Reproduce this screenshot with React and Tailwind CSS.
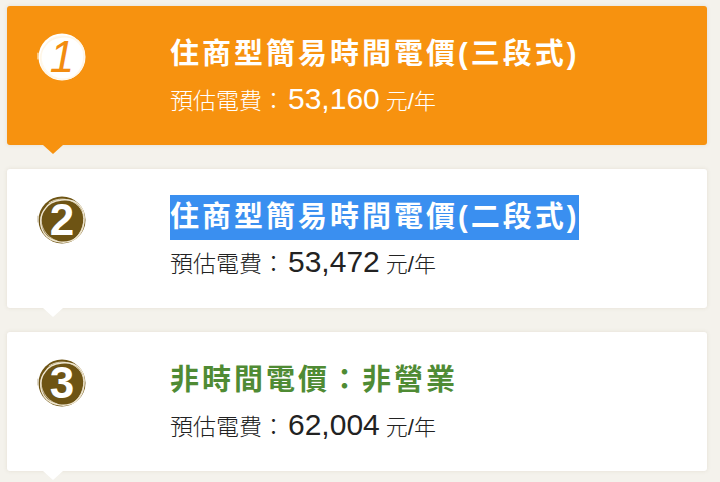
import React from "react";

function Badge({ n, light }) {
  const fill = light ? "#ffffff" : "#6e5414";
  const stroke = light ? "#fff6e6" : "#efe6d0";
  return (
    <div className="relative w-[50px] h-[50px] shrink-0">
      <svg width="50" height="50" viewBox="0 0 50 50" className="absolute inset-0">
        <circle cx="25" cy="25" r="23.5" fill={fill} />
        <path d="M8 14 C14 4 34 1 43 11 C50 19 48 36 39 43 C30 50 14 48 7 38 C2 30 3 20 8 14" fill="none" stroke={stroke} strokeWidth="1.4" strokeLinecap="round" />
        <path d="M12 8 C22 1 38 3 45 16 C49 25 46 38 36 45" fill="none" stroke={stroke} strokeWidth="1" strokeLinecap="round" opacity="0.85" />
        <path d="M4 22 C3 30 8 42 20 46" fill="none" stroke={stroke} strokeWidth="1" strokeLinecap="round" opacity="0.75" />
        <path d="M1 21 L1 27" stroke={light ? "#ffe9c8" : "#c9bfa6"} strokeWidth="1.2" strokeLinecap="round" />
      </svg>
      <div
        className={
          "absolute inset-0 flex items-center justify-center leading-none pb-[1px] " +
          (light ? "text-[#f28c10] italic text-[44px] font-normal" : "text-white text-[44px] font-bold")
        }
        style={{ fontFamily: '"Liberation Sans", Arial, sans-serif' }}
      >
        {n}
      </div>
    </div>
  );
}

function Card({ n, title, amount, variant }) {
  const orange = variant === "orange";
  const cardBg = orange ? "bg-[#f7920f]" : "bg-white";
  const arrow = orange ? "border-t-[#f7920f]" : "border-t-white";
  const sub = orange ? "text-white" : "text-[#222222]";
  let titleEl;
  if (variant === "orange") {
    titleEl = <span className="text-white">{title}</span>;
  } else if (variant === "selected") {
    titleEl = <span className="inline-block text-white bg-[#3a8ff0] leading-[45px]">{title}</span>;
  } else {
    titleEl = <span className="text-[#4f8b34]">{title}</span>;
  }
  return (
    <div className={"relative w-[700px] h-[139px] rounded-[3px] shadow-[0_0_4px_rgba(120,100,60,0.12)] flex items-start pl-[30px] pt-[26px] " + cardBg}>
      <Badge n={n} light={orange} />
      <div className="ml-[83px] flex flex-col" style={{ fontFamily: '"Liberation Sans", "Noto Sans CJK TC", sans-serif' }}>
        <div className="h-[45px] text-[29px] font-bold leading-[45px] tracking-[3px] whitespace-nowrap">{titleEl}</div>
        <div className={"flex items-baseline whitespace-nowrap mt-[4px] " + sub}>
          <span className="text-[23px] leading-[36px] font-light">預估電費：</span>
          <span className="text-[30px] leading-[36px] ml-[3px]">{amount}</span>
          <span className="text-[22px] leading-[36px] ml-[6px] font-light">元/年</span>
        </div>
      </div>
      <div className={"absolute top-full left-[36px] w-0 h-0 border-l-[10px] border-r-[10px] border-t-[9px] border-l-transparent border-r-transparent " + arrow} />
    </div>
  );
}

export default function App() {
  return (
    <div className="w-[720px] h-[482px] overflow-hidden bg-[#f4f2ec] pt-[6px] pl-[7px] flex flex-col gap-[24px]">
      <Card n="1" title="住商型簡易時間電價(三段式)" amount="53,160" variant="orange" />
      <Card n="2" title="住商型簡易時間電價(二段式)" amount="53,472" variant="selected" />
      <Card n="3" title="非時間電價：非營業" amount="62,004" variant="green" />
    </div>
  );
}
